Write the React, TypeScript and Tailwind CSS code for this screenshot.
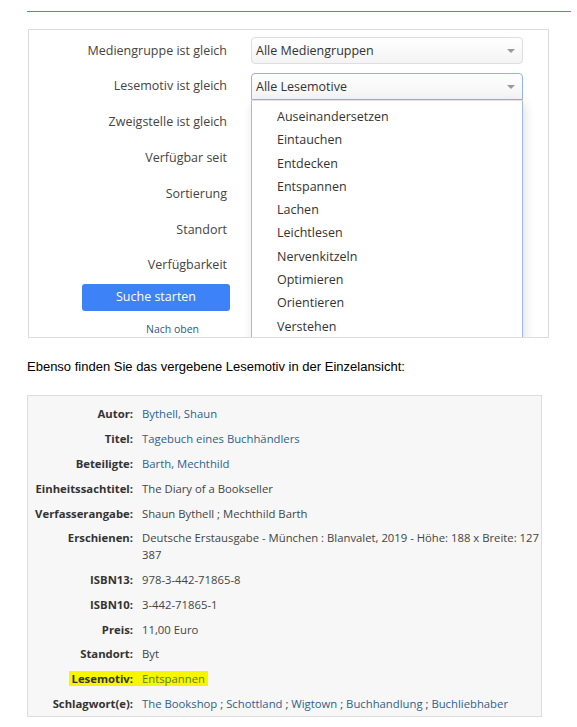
const open = { fontFamily: '"Open Sans", "Noto Sans", sans-serif' };
const arial = { fontFamily: '"Liberation Sans", Arial, sans-serif' };

const rows = [
  "Mediengruppe ist gleich",
  "Lesemotiv ist gleich",
  "Zweigstelle ist gleich",
  "Verfügbar seit",
  "Sortierung",
  "Standort",
  "Verfügbarkeit",
];

const motives = [
  "Auseinandersetzen",
  "Eintauchen",
  "Entdecken",
  "Entspannen",
  "Lachen",
  "Leichtlesen",
  "Nervenkitzeln",
  "Optimieren",
  "Orientieren",
  "Verstehen",
];

const Arrow = () => (
  <svg width="8" height="4" viewBox="0 0 8 4" className="absolute right-[7px] top-[11px]">
    <path d="M0 0h8L4 4z" fill="#9a9a9a" />
  </svg>
);

const Select = ({ value, focused }: { value: string; focused?: boolean }) => (
  <div
    className={
      focused
        ? "relative w-[272px] h-[27px] border border-[#8fb3ec] rounded-t-[4px] bg-gradient-to-b from-white to-[#f3f3f3] pl-[4px] leading-[25px] text-[#333]"
        : "relative w-[272px] h-[27px] border border-[#dedede] rounded-[4px] bg-gradient-to-b from-white to-[#f4f4f4] pl-[4px] leading-[25px] text-[#333]"
    }
  >
    {value}
    <Arrow />
  </div>
);

const Link = ({ children }: any) => <span className="text-[#2f5f8f]">{children}</span>;

const details: { label: string; value: any }[] = [
  { label: "Autor:", value: <Link>Bythell, Shaun</Link> },
  { label: "Titel:", value: <Link>Tagebuch eines Buchhändlers</Link> },
  { label: "Beteiligte:", value: <Link>Barth, Mechthild</Link> },
  { label: "Einheitssachtitel:", value: "The Diary of a Bookseller" },
  { label: "Verfasserangabe:", value: "Shaun Bythell ; Mechthild Barth" },
  {
    label: "Erschienen:",
    value: (
      <>
        Deutsche Erstausgabe - München : Blanvalet, 2019 - Höhe: 188 x Breite: 127
        <br />
        387
      </>
    ),
  },
  { label: "ISBN13:", value: "978-3-442-71865-8" },
  { label: "ISBN10:", value: "3-442-71865-1" },
  { label: "Preis:", value: "11,00 Euro" },
  { label: "Standort:", value: "Byt" },
];

export default function App() {
  return (
    <div className="w-[577px] min-h-[727px] bg-white pt-[11px]" style={open}>
      <div className="ml-[27px] w-[544px] h-px bg-[#4f9a6e]" />

      {/* search form */}
      <div className="relative ml-[28px] mt-[17px] w-[521px] h-[309px] border border-[#dcdcdc] overflow-hidden pt-[3px] text-[12.5px]">
        {rows.map((r, i) => (
          <div key={r} className="flex items-center h-[35.8px]">
            <div className="w-[198px] text-right text-[#444]">{r}</div>
            <div className="ml-[24px]">
              {i === 0 && <Select value="Alle Mediengruppen" />}
              {i === 1 && <Select value="Alle Lesemotive" focused />}
            </div>
          </div>
        ))}
        <button className="ml-[53px] mt-0 w-[148px] h-[27px] rounded-[3px] bg-[#3d82f6] text-white text-[12.5px]">
          Suche starten
        </button>
        <div className="ml-[117px] mt-[11px] text-[10.5px] text-[#2d5a86]">Nach oben</div>

        {/* open dropdown */}
        <div className="absolute left-[222px] top-[70px] w-[272px] h-[260px] bg-white border-x border-[#9dbbec] border-t border-t-[#e2e2e2] shadow-[2px_4px_10px_rgba(0,0,0,0.12)] pt-[4px] pl-[25px] text-[#333]">
          {motives.map((m) => (
            <div key={m} className="h-[23.3px] leading-[23.3px]">
              {m}
            </div>
          ))}
        </div>
      </div>

      <p className="ml-[27px] mt-[19px] text-[13px] leading-[19.5px] text-black" style={arial}>
        Ebenso finden Sie das vergebene Lesemotiv in der Einzelansicht:
      </p>

      {/* detail view */}
      <div className="ml-[27px] mt-[18px] w-[515px] border border-[#dddddd] bg-[#f7f7f7] pt-[6px] text-[11.3px] leading-[17px]">
        {details.map((d) => (
          <div key={d.label} className="flex py-[3.9px]">
            <div className="w-[105px] shrink-0 text-right font-bold text-[#333]">{d.label}</div>
            <div className="ml-[9px] text-[#444]">{d.value}</div>
          </div>
        ))}
        <div className="flex py-[3.9px]">
          <div className="w-[105px] shrink-0 text-right font-bold text-[#333]">
            <span className="bg-[#f6f600] pl-[3px] pr-[9px] -mr-[9px]">Lesemotiv:</span>
          </div>
          <div className="ml-[9px]">
            <span className="bg-[#f6f600] text-[#5b7d17] pr-[3px]">Entspannen</span>
          </div>
        </div>
        <div className="flex py-[3.9px]">
          <div className="w-[105px] shrink-0 text-right font-bold text-[#333]">Schlagwort(e):</div>
          <div className="ml-[9px] text-[#444]">
            <Link>The Bookshop</Link> ; <Link>Schottland</Link> ; <Link>Wigtown</Link> ;{" "}
            <Link>Buchhandlung</Link> ; <Link>Buchliebhaber</Link>
          </div>
        </div>
      </div>
    </div>
  );
}
